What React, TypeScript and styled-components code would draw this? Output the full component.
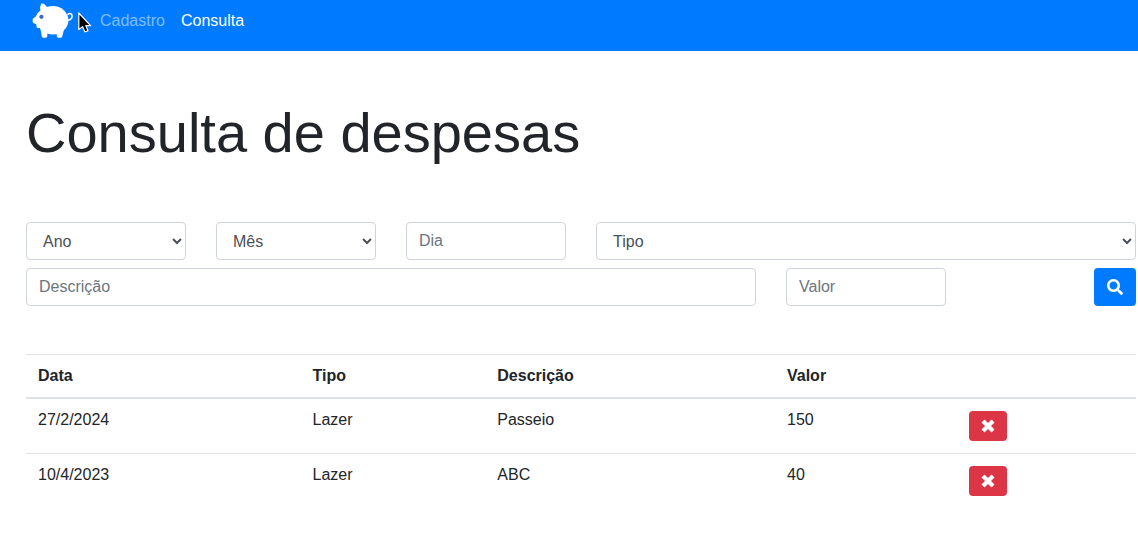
import React from "react";
import styled, { createGlobalStyle } from "styled-components";
import { FaSearch } from "react-icons/fa";

const GlobalStyle = createGlobalStyle`
  *, *::before, *::after { box-sizing: border-box; }
  html { overflow: hidden; }
  body {
    margin: 0;
    background: #fff;
    color: #212529;
    font-family: "Liberation Sans", Arial, sans-serif;
    font-size: 16px;
    line-height: 18px;
  }
`;

const Navbar = styled.nav`
  position: relative;
  display: flex;
  align-items: flex-start;
  height: 51px;
  padding-left: 32px;
  background: #007bff;
`;

const Brand = styled.a`
  display: block;
  width: 60px;
  height: 42px;
`;

const NavLink = styled.a<{ $active?: boolean }>`
  padding: 12px 8px;
  color: ${(p) => (p.$active ? "#fff" : "rgba(255, 255, 255, 0.5)")};
  text-decoration: none;
`;

const Pointer = styled.svg`
  position: absolute;
  left: 77px;
  top: 11px;
`;

const Container = styled.main`
  width: 1110px;
  margin-left: 26px;
`;

const Title = styled.h1`
  margin: 0 0 56px;
  padding-top: 48px;
  font-size: 56px;
  font-weight: 400;
  line-height: 67px;
`;

const FormRow = styled.div<{ $columns: string }>`
  display: grid;
  grid-template-columns: ${(p) => p.$columns};
  column-gap: 30px;
  margin-bottom: 8px;
`;

const Input = styled.input`
  width: 100%;
  height: 38px;
  padding: 6px 12px;
  border: 1px solid #ced4da;
  border-radius: 4px;
  background: #fff;
  color: #495057;
  font: inherit;
  line-height: 24px;
  &::placeholder { color: #6c757d; opacity: 1; }
`;

const Select = styled.select`
  width: 100%;
  height: 38px;
  padding: 6px 12px;
  border: 1px solid #ced4da;
  border-radius: 4px;
  background: #fff;
  color: #495057;
  font: inherit;
  line-height: 24px;
`;

const SearchButton = styled.button`
  display: flex;
  align-items: center;
  justify-content: center;
  justify-self: end;
  width: 42px;
  height: 38px;
  padding: 0;
  border: 0;
  border-radius: 4px;
  background: #007bff;
  color: #fff;
`;

const Table = styled.table`
  width: 100%;
  margin-top: 48px;
  table-layout: fixed;
  border-collapse: collapse;
`;

const Column = styled.col<{ $width: number }>`
  width: ${(p) => p.$width}px;
`;

const HeadCell = styled.th`
  padding: 12px;
  border-top: 1px solid #dee2e6;
  border-bottom: 2px solid #dee2e6;
  text-align: left;
`;

const Cell = styled.td`
  padding: 12px;
  border-top: 1px solid #dee2e6;
  vertical-align: top;
`;

const DeleteButton = styled.button`
  display: flex;
  align-items: center;
  justify-content: center;
  width: 38px;
  height: 30px;
  padding: 0;
  border: 0;
  border-radius: 4px;
  background: #dc3545;
  color: #fff;
`;

const PigLogo = () => (
  <svg width="42" height="42" viewBox="0 0 42 42" fill="#fff">
    <ellipse cx="20.8" cy="20.2" rx="15.6" ry="14.2" />
    <path d="M9.4 3.2 Q13.6 3.8 15.4 8 L14 20 L10 28 H4.9 L4.2 24.2 L1.4 23 Q0.7 22.6 0.7 21.8 V19.4 Q0.7 18.6 1.4 18.2 L3.8 16.6 Q5 12.6 8.4 10.4 Q7.6 6.2 9.4 3.2 Z" />
    <path d="M8 27 H16 L15.2 36.2 Q14.8 37.8 13.3 37.8 H11.4 Q10.2 37.8 9.9 36.4 Z" />
    <path d="M24 28 H32.4 L30.2 36.4 Q29.8 37.8 28.6 37.8 H26.6 Q25.2 37.8 24.9 36.4 Z" />
    <path
      d="M35 18.9 C36 20.8 39.8 20 40.1 16.6 C40.3 13.6 38 12.7 36 14.2"
      fill="none"
      stroke="#fff"
      strokeWidth="1.5"
      strokeLinecap="round"
    />
    <circle cx="9.4" cy="16.8" r="2.1" fill="#3f68bd" />
  </svg>
);

const TimesIcon = () => (
  <svg
    width="12"
    height="16"
    viewBox="0 0 384 512"
    fill="currentColor"
    stroke="currentColor"
    strokeWidth="14"
    overflow="visible"
  >
    <path d="M323.1 441l53.9-53.9c9.4-9.4 9.4-24.5 0-33.9L279.8 256l97.2-97.2c9.4-9.4 9.4-24.5 0-33.9L323.1 71c-9.4-9.4-24.5-9.4-33.9 0L192 168.2 94.8 71c-9.4-9.4-24.5-9.4-33.9 0L7 124.9c-9.4 9.4-9.4 24.5 0 33.9l97.2 97.2L7 353.2c-9.4 9.4-9.4 24.5 0 33.9L60.9 441c9.4 9.4 24.5 9.4 33.9 0l97.2-97.2 97.2 97.2c9.3 9.3 24.5 9.3 33.9 0z" />
  </svg>
);

const expenses = [
  { date: "27/2/2024", type: "Lazer", description: "Passeio", value: "150" },
  { date: "10/4/2023", type: "Lazer", description: "ABC", value: "40" },
];

export default function App() {
  return (
    <>
      <GlobalStyle />
      <Navbar>
        <Brand>
          <PigLogo />
        </Brand>
        <NavLink>Cadastro</NavLink>
        <NavLink $active>Consulta</NavLink>
        <Pointer width="16" height="24" viewBox="0 0 16 24">
          <path
            d="M1.8 2 V18.6 L5.5 15.6 L8 21 L11 19.8 L8.8 14.6 H13.6 Z"
            fill="#000"
            stroke="#fff"
            strokeWidth="1.2"
            strokeLinejoin="round"
          />
        </Pointer>
      </Navbar>
      <Container>
        <Title>Consulta de despesas</Title>
        <FormRow $columns="160px 160px 160px 1fr">
          <Select><option>Ano</option></Select>
          <Select><option>Mês</option></Select>
          <Input placeholder="Dia" />
          <Select><option>Tipo</option></Select>
        </FormRow>
        <FormRow $columns="730px 160px 1fr">
          <Input placeholder="Descrição" />
          <Input placeholder="Valor" />
          <SearchButton aria-label="Pesquisar">
            <FaSearch size={16} />
          </SearchButton>
        </FormRow>
        <Table>
          <colgroup>
            <Column $width={274.5} />
            <Column $width={184.8} />
            <Column $width={289.7} />
            <Column $width={182} />
            <Column $width={179} />
          </colgroup>
          <thead>
            <tr>
              <HeadCell>Data</HeadCell>
              <HeadCell>Tipo</HeadCell>
              <HeadCell>Descrição</HeadCell>
              <HeadCell>Valor</HeadCell>
              <HeadCell />
            </tr>
          </thead>
          <tbody>
            {expenses.map((e) => (
              <tr key={e.date}>
                <Cell>{e.date}</Cell>
                <Cell>{e.type}</Cell>
                <Cell>{e.description}</Cell>
                <Cell>{e.value}</Cell>
                <Cell>
                  <DeleteButton aria-label="Excluir">
                    <TimesIcon />
                  </DeleteButton>
                </Cell>
              </tr>
            ))}
          </tbody>
        </Table>
      </Container>
    </>
  );
}
